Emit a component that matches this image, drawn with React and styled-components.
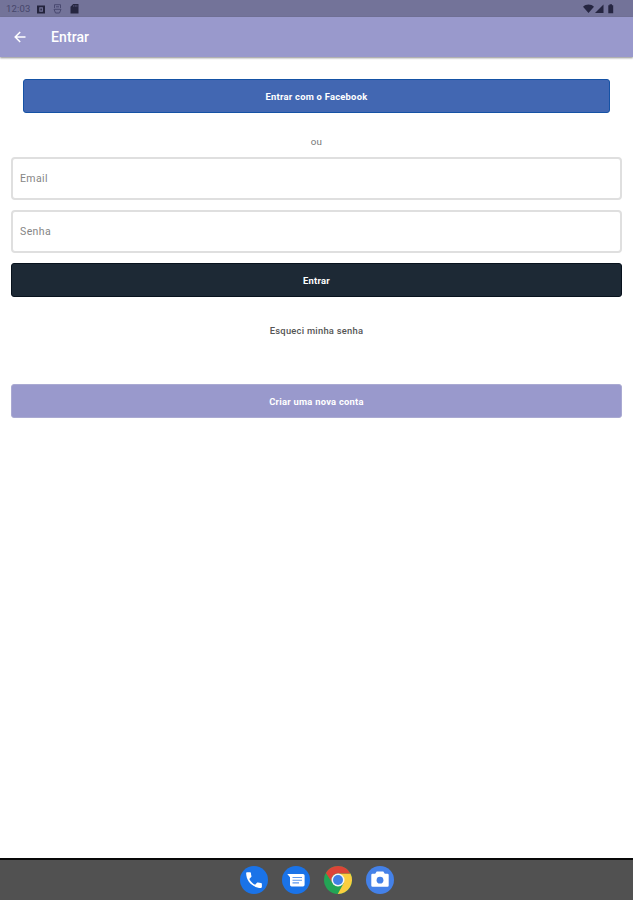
import React, { useState } from "react";
import styled, { createGlobalStyle } from "styled-components";

const StatusLeftIcons = () => (
	<>
		<svg width="8" height="9" viewBox="0 0 8 9">
			<path fill="#23233c" fillRule="evenodd" d="M0 .5h8v8H0zM2.3 2.2v4.6h3.6V2.2z" />
			<path fill="#23233c" d="M3.4 3.6h1.4v2H3.4z" />
		</svg>
		<svg width="9" height="10" viewBox="0 0 9 10" fill="none" stroke="#494970" strokeWidth="1">
			<path d="M1.500 4V.7h6V4" />
			<path d="M3 2.800h3M1 5.300h7L6.500 9h-4z" />
		</svg>
		<svg width="9" height="10" viewBox="0 0 9 10">
			<path fill="#262640" d="M3.200 0H8.500v9.500H.5V2.700z" />
			<path stroke="#66668e" strokeWidth=".7" d="M3.700 1.200v1.500M5.300 1.200v1.500M6.900 1.200v1.500" />
		</svg>
	</>
);

const SignalIcons = () => (
	<svg width="32" height="10" viewBox="0 0 32 10" fill="#252541">
		<path d="M0 2.700C3-.1 8-.1 11 2.700L5.500 9z" />
		<path d="M20.500.5V9H12z" />
		<path d="M25.300 1.300h1.200V.3h2.500v1h1.200V9.300h-4.900z" />
	</svg>
);

const BackIcon = () => (
	<svg width="12" height="12" viewBox="0 0 12 12" fill="none" stroke="#fff" strokeWidth="1.500">
		<path d="M11.500 6H1.300M6.200 1L1.200 6l5 5" />
	</svg>
);

const PhoneIcon = () => (
	<svg width="28" height="28" viewBox="0 0 28 28">
		<circle cx="14" cy="14" r="14" fill="#1a73e8" />
		<path
			fill="#fff"
			transform="translate(3.500 3.500) scale(.875)"
			d="M6.620 10.790c1.440 2.830 3.760 5.140 6.590 6.590l2.200-2.200c.27-.27.67-.36 1.020-.24 1.120.37 2.330.57 3.570.57.55 0 1 .45 1 1V20c0 .55-.45 1-1 1C10.610 21 3 13.390 3 4c0-.55.45-1 1-1h3.500c.55 0 1 .45 1 1 0 1.250.2 2.450.57 3.570.11.35.03.74-.25 1.020z"
		/>
	</svg>
);

const MessagesIcon = () => (
	<svg width="28" height="28" viewBox="0 0 28 28">
		<circle cx="14" cy="14" r="14" fill="#1a73e8" />
		<path fill="#fff" d="M5.300 8H21q1.600 0 1.600 1.600v9.200q0 1.600-1.600 1.600H9.600Q8 20.400 8 18.800v-7.500z" />
		<path stroke="#5c98ed" strokeWidth="1.100" d="M10.500 11.500h9.500M10.500 14.200h9.500M10.500 16.900h6.500" />
	</svg>
);

const ChromeIcon = () => (
	<svg width="28" height="28" viewBox="0 0 28 28">
		<circle cx="14" cy="14" r="14" fill="#23a455" />
		<path fill="#fbce3f" d="M14 7.500h12.400A14 14 0 0 1 13.800 28l5.800-10.700z" />
		<path fill="#dc4437" d="M1.900 7A14 14 0 0 1 26.400 7.500H14a6.500 6.500 0 0 0-5.800 9.300z" />
		<circle cx="14" cy="14" r="6.500" fill="#f5f6f5" />
		<circle cx="14" cy="14" r="5" fill="#4080e5" />
	</svg>
);

const CameraIcon = () => (
	<svg width="28" height="28" viewBox="0 0 28 28">
		<circle cx="14" cy="14" r="14" fill="#4481e8" />
		<path fill="#fff" d="M10.700 5.500h6.600l1.500 2.300h2.700q1.200 0 1.200 1.200v10.600q0 1.200-1.200 1.200h-15q-1.200 0-1.200-1.200V9q0-1.200 1.200-1.200h2.700z" />
		<circle cx="14" cy="14.200" r="3.400" fill="#4481e8" />
	</svg>
);

const Field = ({ label, type }) => {
	const [value, setValue] = useState("");

	return (
		<FieldBox>
			{!value && <FieldLabel>{label}</FieldLabel>}
			<FieldInput type={type} value={value} onChange={(e) => setValue(e.target.value)} />
		</FieldBox>
	);
};

const App = () => {
	return (
		<>
			<GlobalStyle />
			<Screen>
				<StatusBar>
					<StatusGroup>
						<Clock>12:03</Clock>
						<StatusLeftIcons />
					</StatusGroup>
					<SignalIcons />
				</StatusBar>
				<Header>
					<BackButton aria-label="Voltar">
						<BackIcon />
					</BackButton>
					<Title>Entrar</Title>
				</Header>
				<Form>
					<FacebookButton>Entrar com o Facebook</FacebookButton>
					<Divider>ou</Divider>
					<Field label="Email" type="email" />
					<Field label="Senha" type="password" />
					<LoginButton>Entrar</LoginButton>
					<ForgotButton>Esqueci minha senha</ForgotButton>
					<CreateButton>Criar uma nova conta</CreateButton>
				</Form>
				<Dock>
					<PhoneIcon />
					<MessagesIcon />
					<ChromeIcon />
					<CameraIcon />
				</Dock>
			</Screen>
		</>
	);
};

export default App;

const GlobalStyle = createGlobalStyle`
	* {
		box-sizing: border-box;
	}

	body {
		margin: 0;
		background-color: #fff;
		font-family: Roboto, "Liberation Sans", sans-serif;
	}
`;

const Screen = styled.div`
	display: flex;
	flex-direction: column;
	width: 100%;
	height: 100vh;
	overflow: hidden;
`;

const StatusBar = styled.div`
	display: flex;
	flex-shrink: 0;
	align-items: center;
	justify-content: space-between;
	padding: 1px 18px 0 6px;
	height: 17px;
	background-color: #737399;
`;

const StatusGroup = styled.div`
	display: flex;
	align-items: center;
	gap: 8px;
`;

const Clock = styled.span`
	margin-right: -2px;
	width: 25px;
	color: #46466b;
	font-size: 9.5px;
	line-height: 12px;
	letter-spacing: 0.15px;
`;

const Header = styled.header`
	z-index: 1;
	display: flex;
	flex-shrink: 0;
	align-items: center;
	padding-left: 14px;
	height: 40px;
	background-color: #9999cc;
	box-shadow: 0 1px 2px rgba(0, 0, 0, 0.45);
`;

const BackButton = styled.button`
	display: flex;
	margin: 0 25px 0 0;
	border: 0;
	padding: 0;
	background: none;
	cursor: pointer;
`;

const Title = styled.h1`
	margin: 0;
	color: #fff;
	font-size: 14px;
	font-weight: 500;
	line-height: 20px;
	letter-spacing: 0.1px;
`;

const Form = styled.main`
	display: flex;
	flex: 1;
	flex-direction: column;
	padding: 22px 11px 0;
`;

const Button = styled.button`
	flex-shrink: 0;
	border: 1px solid;
	border-radius: 3px;
	padding: 2px 0 0;
	height: 34px;
	color: #fff;
	font-family: inherit;
	font-size: 9.4px;
	font-weight: 700;
	line-height: 14px;
	letter-spacing: 0.24px;
	cursor: pointer;
`;

const FacebookButton = styled(Button)`
	margin: 0 12px;
	border-color: #1552a5;
	background-color: #4267b2;
`;

const Divider = styled.div`
	margin: 22px 0 8px;
	color: #777;
	font-size: 9.8px;
	line-height: 14px;
	letter-spacing: 0.2px;
	text-align: center;
`;

const FieldBox = styled.label`
	display: flex;
	flex-shrink: 0;
	align-items: center;
	margin-bottom: 10.5px;
	border: 2px solid #dfdfdf;
	border-radius: 4px;
	padding: 0 7px;
	height: 42.5px;
`;

const FieldLabel = styled.span`
	color: #858585;
	font-size: 10.5px;
	letter-spacing: 0.4px;
`;

const FieldInput = styled.input`
	flex: 1;
	border: 0;
	padding: 0;
	min-width: 0;
	background: none;
	font-family: inherit;
	font-size: 10.5px;
	outline: none;
`;

const LoginButton = styled(Button)`
	border-color: #08121d;
	background-color: #1d2935;
`;

const ForgotButton = styled(Button)`
	margin: 17px 0 36px;
	border-color: transparent;
	padding: 0;
	background: none;
	color: #555;
	font-weight: 500;
`;

const CreateButton = styled(Button)`
	border-color: #aaaad2;
	background-color: #9999cc;
`;

const Dock = styled.footer`
	display: flex;
	flex-shrink: 0;
	align-items: center;
	justify-content: center;
	gap: 14px;
	border-top: 2px solid #080808;
	padding-bottom: 1px;
	height: 42px;
	background-color: #515151;
`;
